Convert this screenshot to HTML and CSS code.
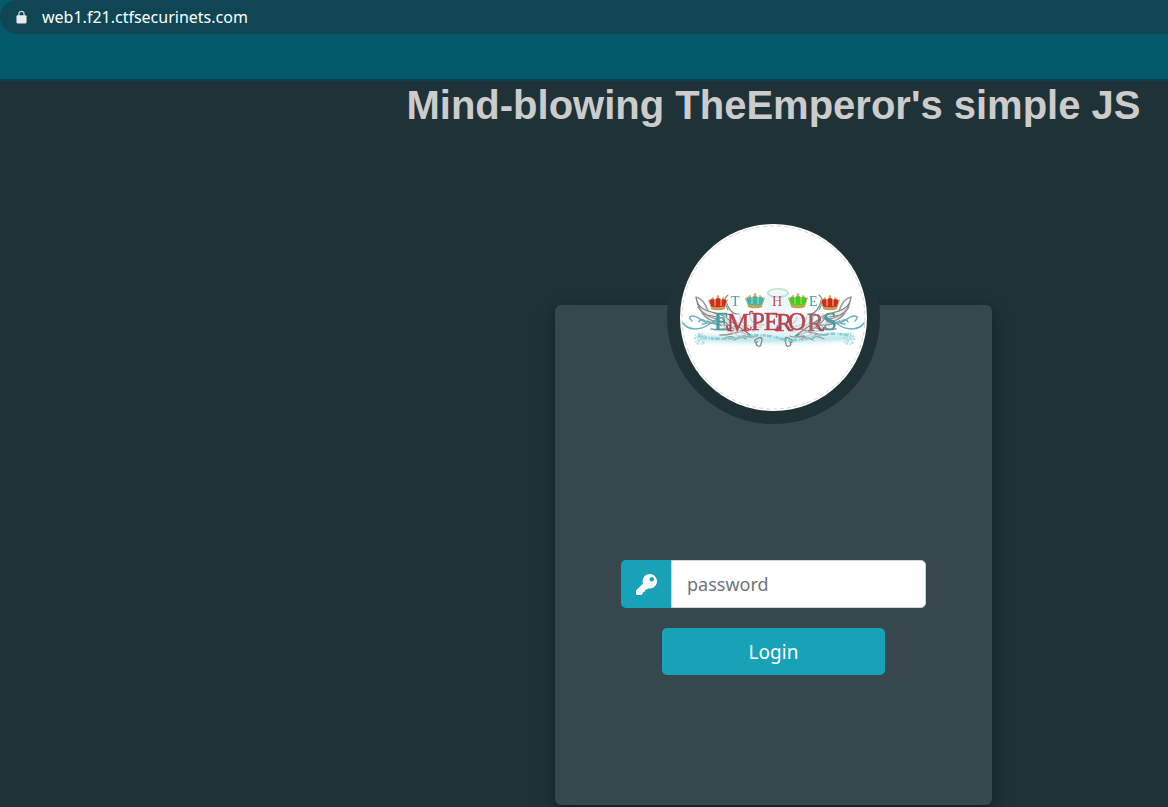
FILE: index.html
```html
<!DOCTYPE html>
<html lang="en">
<head>
<meta charset="utf-8">
<title>Mind-blowing TheEmperor's simple JS</title>
<link rel="stylesheet" href="styles.css">
</head>
<body>
<header class="toolbar">
  <div class="address">
    <svg class="lock" viewBox="0 0 12 14" aria-hidden="true">
      <path d="M3.2 6V3.6a2.8 2.8 0 0 1 5.6 0V6" fill="none" stroke="#c3d1d4" stroke-width="1.4"/>
      <rect x="0.5" y="5" width="11" height="9" rx="1.2" fill="#e8eaed"/>
    </svg>
    <span>web1.f21.ctfsecurinets.com</span>
  </div>
</header>
<main class="page">
  <h1 class="title">Mind-blowing TheEmperor's simple JS</h1>
  <section class="card">
    <div class="avatar">
      <svg class="logo" viewBox="0 0 187 187" role="img" aria-label="The Emperors">
        <defs>
          <filter id="soft" x="-5%" y="-5%" width="110%" height="110%"><feGaussianBlur stdDeviation="0.5"/></filter>
          <filter id="mist" x="-20%" y="-60%" width="140%" height="220%"><feGaussianBlur stdDeviation="2"/></filter>
          <g id="crown">
            <path d="M3 12 1 6Q4 2 7 5Q10 0 13 5Q16 2 19 6L17 12Q10 14 3 12z" stroke="#c9a85a" stroke-width="1"/>
            <path d="M7 11V5M13 11V5" stroke="#dfc878" stroke-width="1.1"/>
            <path d="M3 13q7 2.5 14 0" fill="none" stroke="#c39a45" stroke-width="2.2"/>
            <path d="M10 3V0M8.6 1.3H11.4" stroke="#c9a85a" stroke-width="1"/>
            <circle cx="5" cy="3" r="0.9" fill="#cdb06a"/><circle cx="15" cy="3" r="0.9" fill="#cdb06a"/><circle cx="1" cy="5.5" r="1" fill="#cdb06a"/><circle cx="19" cy="5.5" r="1" fill="#cdb06a"/>
          </g>
          <g id="wing" fill="none" stroke-linecap="round">
            <path d="M16 73C17 86 29 87 42 91L72 112Q50 106 42 94L27 91Q18 87 16 73z" fill="#eeeeee" stroke="#808080" stroke-width="1.2"/>
            <path d="M16 73q8 2 12 14M18 83q5 9 19 12M22 89q7 9 18 9M27 97q11 5 22 4M31 105q14 2 26-3M40 111q15 0 27-7" stroke="#9a9a9a" stroke-width="1.5"/>
            <path d="M38 93q5 14 25 20M44 90q6 15 23 21M52 89q4 14 22 18M60 92q2 12 21 11M70 93q1 8 14 8" stroke="#d0d0d0" stroke-width="1.4"/>
            <path d="M48 71q-6 4 0 15M46 77q4 14 13 13" stroke="#819396" stroke-width="1.1"/>
            <path d="M43 115q8-4 11-1M54 116q8-5 12-1M63 112q11 2 14 0" stroke="#9a9a9a" stroke-width="1.3"/>
            <path d="M75 116q7-5 7 0l-1 4q0 3-3 2t-1-4q-3 1-2-2" stroke="#888" stroke-width="1.3"/>
            <path d="M3 99c5 8 18 7 25 2 9-6 11-8 16-7M12 97q-5-5 1-5c7 0 12 11 22 6M19 98q2-4 6-1t-3 3" stroke="#62b3bc" stroke-width="1.5"/>
          </g>
        </defs>
        <circle cx="93.5" cy="93.5" r="91.5" fill="none" stroke="#a4abad" stroke-width="0.5" stroke-dasharray="4 3"/>
        <g filter="url(#mist)">
          <ellipse cx="93" cy="101" rx="60" ry="11" fill="#e5f5f8"/>
          <ellipse cx="98" cy="78" rx="15" ry="12" fill="#ebf8fb"/>
          <path d="M18 114Q91 118 172 113" stroke="#b5e6eb" stroke-width="6" fill="none"/>
        </g>
        <g filter="url(#soft)">
          <use href="#wing"/>
          <use href="#wing" transform="matrix(-1 0 0 1 187 0)"/>
          <path d="M18 112Q40 117 61 113T98 114T132 113T172 112" fill="none" stroke="#85ced7" stroke-width="2.5" stroke-dasharray="3 1 5 2 1 1"/>
          <g fill="none" stroke="#a8dee4" stroke-width="2.5" stroke-dasharray="1 2 2 1"><circle cx="20" cy="115" r="5"/><circle cx="20" cy="115" r="2"/><circle cx="169" cy="115" r="5"/><circle cx="169" cy="115" r="2"/></g>
          <ellipse cx="98" cy="69" rx="10" ry="4" fill="none" stroke="#b5e6ec" stroke-width="1.8"/>
          <path d="M88 68q10-6 20 0" fill="none" stroke="#e5e9a6" stroke-width="0.8"/>
          <use href="#crown" x="28" y="71" fill="#cf2922"/>
          <use href="#crown" x="65" y="69" fill="#35b9b8"/>
          <use href="#crown" x="108" y="69" fill="#35d51d"/>
          <use href="#crown" x="140" y="71" fill="#cf2922"/>
          <text class="small-letters" x="51 92 129" y="82"><tspan fill="#419da4">T</tspan><tspan fill="#d54853">H</tspan><tspan fill="#419da4">E</tspan></text>
          <text class="big-letters" x="34 47 71 84 96 108 127 143" y="106 107 106 106 107 106 107 106"><tspan fill="#4b9aa0" stroke="#4b9aa0">E</tspan>MPERO<tspan fill="#a26367" stroke="#a26367">R</tspan><tspan fill="#4b9aa0" stroke="#4b9aa0">S</tspan></text>
          <path d="M50 105q-4 1-3-3M67 104q4 4 4-1M73 88q-4-2-3 3M95 106q5 2 3-3M107 104q4 5 6 0M139 104q4 5 5-1" fill="none" stroke="#b9444e" stroke-width="1.5"/>
        </g>
      </svg>
    </div>
    <form class="login">
      <div class="field">
        <label class="field-icon" for="password" aria-label="Password">
          <svg viewBox="0 0 512 512" aria-hidden="true"><path fill="#fff" d="M512 176C512 273 433 352 336 352c-14 0-26-1-38-4-18 29-42 35-68 36-3 35-24 58-62 64-6 45-28 64-62 64H42C16 512 0 496 0 470v-48c0-14 5-25 14-34l155-155C163 214 160 195 160 176 160 79 239 0 336 0 433 0 512 79 512 176zM328 128c0 31 25 56 56 56s56-25 56-56-25-56-56-56-56 25-56 56z"/></svg>
        </label>
        <input class="field-input" id="password" type="password" placeholder="password">
      </div>
      <button class="submit" type="button">Login</button>
    </form>
  </section>
</main>
</body>
</html>
```
FILE: styles.css
```css
* {
  box-sizing: border-box;
}

body {
  margin: 0;
  min-height: 100vh;
  background: #1e3238;
  font-family: "Noto Sans", "Open Sans", sans-serif;
}

.toolbar {
  height: 81px;
  background: #035a6c;
  border-bottom: 2px solid #06424f;
}

.address {
  display: flex;
  align-items: center;
  gap: 15px;
  height: 34px;
  padding-left: 16px;
  border-radius: 17px 0 0 17px;
  background: #0e4753;
  color: #fff;
  font-size: 16px;
  line-height: 24px;
}

.lock {
  width: 11px;
  height: 14px;
}

.page {
  display: flex;
  flex-direction: column;
  align-items: center;
  padding: 0 0 2px 379px;
}

.title {
  margin: 0;
  color: #ccc;
  font: bold 40px/48px "Liberation Sans", Arial, sans-serif;
  white-space: nowrap;
}

.card {
  display: flex;
  flex-direction: column;
  align-items: center;
  width: 437px;
  height: 500px;
  margin-top: 176px;
  border-radius: 6px;
  background: #36474d;
  box-shadow: 0 5px 10px rgba(0, 0, 0, 0.2), 0 8px 25px rgba(0, 0, 0, 0.19);
}

.avatar {
  width: 213px;
  height: 213px;
  flex: none;
  margin-top: -94px;
  padding: 13px;
  border-radius: 50%;
  background: #1e3238;
}

.logo {
  display: block;
  width: 100%;
  border-radius: 50%;
  background: #fff;
}

.small-letters {
  font: 14px "Liberation Serif", serif;
}

.big-letters {
  fill: #b9444e;
  stroke: #b9444e;
  stroke-width: 0.5px;
  font: 25px "Liberation Serif", serif;
}

.login {
  display: flex;
  flex-direction: column;
  align-items: center;
  gap: 20px;
  width: 305px;
  margin-top: 136px;
}

.field {
  display: flex;
  width: 100%;
  height: 48px;
}

.field-icon {
  display: flex;
  align-items: center;
  justify-content: center;
  flex: none;
  width: 50px;
  border-radius: 5px 0 0 5px;
  background: #17a2b8;
}

.field-icon svg {
  width: 21px;
  height: 21px;
}

.field-input {
  flex: 1;
  min-width: 0;
  padding: 0 15px;
  border: 1px solid #ced4da;
  border-radius: 0 5px 5px 0;
  background: #fff;
  color: #495057;
  font: 18px/28px "Noto Sans", "Open Sans", sans-serif;
}

.field-input::placeholder {
  color: #6c757d;
  opacity: 1;
}

.submit {
  width: 223px;
  height: 47px;
  border: 0;
  border-radius: 5px;
  background: #17a2b8;
  color: #fff;
  font: 19px/28px "Noto Sans", "Open Sans", sans-serif;
}
```
